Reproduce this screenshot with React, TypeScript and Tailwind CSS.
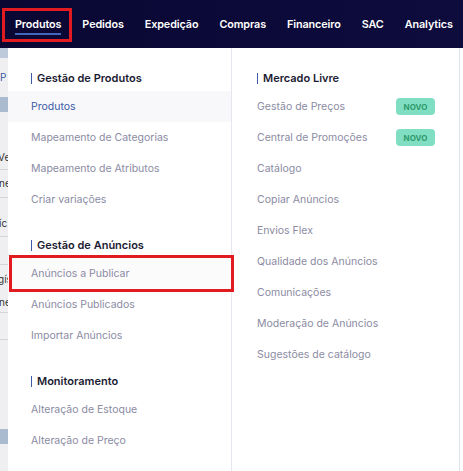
const navItems = ["Produtos", "Pedidos", "Expedição", "Compras", "Financeiro", "SAC", "Analytics"];

type Item = { label: string; active?: boolean; badge?: boolean; marked?: boolean };
type Section = { title: string; items: Item[] };

const leftSections: Section[] = [
  {
    title: "Gestão de Produtos",
    items: [
      { label: "Produtos", active: true },
      { label: "Mapeamento de Categorias" },
      { label: "Mapeamento de Atributos" },
      { label: "Criar variações" },
    ],
  },
  {
    title: "Gestão de Anúncios",
    items: [
      { label: "Anúncios a Publicar", marked: true },
      { label: "Anúncios Publicados" },
      { label: "Importar Anúncios" },
    ],
  },
  {
    title: "Monitoramento",
    items: [{ label: "Alteração de Estoque" }, { label: "Alteração de Preço" }],
  },
];

const mercadoLivre: Item[] = [
  { label: "Gestão de Preços", badge: true },
  { label: "Central de Promoções", badge: true },
  { label: "Catálogo" },
  { label: "Copiar Anúncios" },
  { label: "Envios Flex" },
  { label: "Qualidade dos Anúncios" },
  { label: "Comunicações" },
  { label: "Moderação de Anúncios" },
  { label: "Sugestões de catálogo" },
];

function Heading({ title }: { title: string }) {
  return (
    <div className="flex h-[16px] items-center gap-[5px] text-[11px] font-semibold text-[#1b1b33]">
      <span className="h-[11px] w-px bg-[#3c5aa8]" />
      {title}
    </div>
  );
}

function MenuRow({ item, pl }: { item: Item; pl: string }) {
  return (
    <div
      className={`relative flex h-[31px] items-center justify-between pr-[24px] text-[10.5px] ${pl} ${
        item.active ? "bg-[#f8f8fa] text-[#3c5aa8]" : item.marked ? "bg-[#fbfbfc] text-[#8b8ba3]" : "text-[#8b8ba3]"
      }`}
    >
      {item.label}
      {item.badge && (
        <span className="flex h-[17px] w-[39px] items-center justify-center rounded-[4px] bg-[#80dfc2] text-[8px] font-bold text-[#2f9a6d]">
          NOVO
        </span>
      )}
      {item.marked && (
        <span className="pointer-events-none absolute left-[1px] right-[-3px] top-[-3px] bottom-[-3px] border-[3px] border-[#e11b1f]" />
      )}
    </div>
  );
}

// slice of the page underneath, peeking out left of the dropdown
function PageEdge() {
  return (
    <div className="flex w-[8px] shrink-0 flex-col overflow-hidden whitespace-nowrap bg-[#efeff1] text-[10px] text-[#333]">
      <div className="h-[10px] bg-[#bccadb]" />
      <div className="flex h-[39px] items-center text-[#3c5aa8]">P</div>
      <div className="h-[15px] bg-[#aabbd0]" />
      <div className="h-[33px]" />
      <div className="flex h-[25px] items-center border-b border-[#d4d4da] ml-[-2px]">Ve</div>
      <div className="flex h-[28px] items-center border-b border-[#d4d4da] ml-[-1px]">ne</div>
      <div className="h-[12px]" />
      <div className="flex h-[27px] items-center border-b border-[#d4d4da] ml-[-1px]">íc</div>
      <div className="h-[28px] border-b border-[#d4d4da]" />
      <div className="flex h-[28px] items-center ml-[-2px]">gís</div>
      <div className="flex h-[20px] items-center border-b border-[#d4d4da] ml-[-1px]">ne</div>
      <div className="h-[27px] border-b border-[#d4d4da]" />
      <div className="h-[89px]" />
      <div className="h-[15px] bg-[#aabbd0]" />
      <div className="flex-1" />
    </div>
  );
}

export default function App() {
  return (
    <div className="relative flex h-[471px] w-[463px] flex-col overflow-hidden bg-white font-['Inter',sans-serif]">
      <nav className="flex h-[48px] shrink-0 items-center gap-[21px] bg-gradient-to-r from-[#0a0733] to-[#0d0c3d] pl-[15px] text-[10.8px] font-semibold tracking-[-0.1px] text-white">
        {navItems.map((n, i) => (
          <div key={n} className="relative flex h-full items-center pt-[2px]">
            {n}
            {i === 0 && <span className="absolute left-0 right-0 top-[33px] h-[2px] bg-[#4566b8]" />}
          </div>
        ))}
      </nav>
      <span className="pointer-events-none absolute left-[2px] top-[8px] h-[34px] w-[70px] border-[3px] border-[#e11b1f]" />

      <div className="flex flex-1">
        <PageEdge />
        <div className="flex flex-1 border-r border-[#e2e2ea] mr-[3px]">
          <div className="flex w-[224px] flex-col border-r border-[#e6e6ee] pt-[22px]">
            {leftSections.map((s, si) => (
              <div key={s.title} className={si > 0 ? "mt-[22px]" : ""}>
                <div className="pl-[23px]">
                  <Heading title={s.title} />
                </div>
                <div className="mt-[5px]">
                  {s.items.map((it) => (
                    <MenuRow key={it.label} item={it} pl="pl-[23px]" />
                  ))}
                </div>
              </div>
            ))}
          </div>
          <div className="flex flex-1 flex-col pt-[22px]">
            <div className="pl-[25px]">
              <Heading title="Mercado Livre" />
            </div>
            <div className="mt-[5px]">
              {mercadoLivre.map((it) => (
                <MenuRow key={it.label} item={it} pl="pl-[25px]" />
              ))}
            </div>
          </div>
        </div>
      </div>
    </div>
  );
}
